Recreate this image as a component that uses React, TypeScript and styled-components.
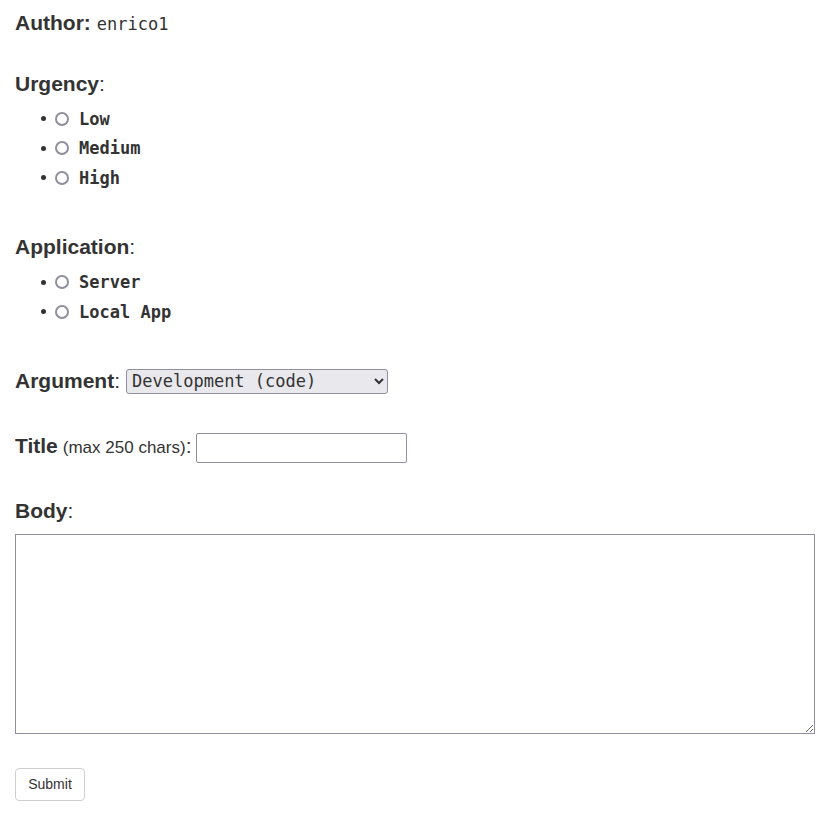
import React from "react";
import styled, { createGlobalStyle } from "styled-components";

const Global = createGlobalStyle`
  html, body { margin: 0; padding: 0; background: #fff; }
  body { font-family: "Liberation Sans", Arial, sans-serif; color: #333; }
`;

const Page = styled.form`
  padding: 11px 15px 20px;
  width: 800px;
  display: flex;
  flex-direction: column;
  align-items: flex-start;
`;

const Row = styled.div<{ $top?: number; $align?: string }>`
  display: flex;
  align-items: ${(p) => p.$align ?? "baseline"};
  margin-top: ${(p) => p.$top ?? 0}px;
  line-height: 24px;
  font-size: 21px;
`;

const Label = styled.strong`
  font-weight: 700;
  font-size: 21px;
`;

const Hint = styled.span`
  font-size: 17px;
  margin-left: 5px;
`;

const Colon = styled.span`
  margin-right: 5px;
`;

const Mono = styled.code`
  font-family: "DejaVu Sans Mono", monospace;
  font-size: 17px;
  margin-left: 6px;
`;

const List = styled.ul<{ $top?: number }>`
  margin: ${(p) => p.$top ?? 8}px 0 0;
  padding-left: 26px;
  list-style: none;
`;

const Item = styled.li`
  display: flex;
  align-items: center;
  height: 29.5px;
  font-size: 17px;
  &::before {
    content: "";
    width: 5px;
    height: 5px;
    border-radius: 50%;
    background: #333;
    margin-right: 9px;
  }
`;

const Choice = styled.label`
  display: flex;
  align-items: center;
  gap: 10px;
  font-family: "DejaVu Sans Mono", monospace;
  font-weight: 700;
  font-size: 17px;
  line-height: 20px;
`;

const Radio = styled.input`
  appearance: none;
  width: 14px;
  height: 14px;
  margin: 0;
  box-sizing: border-box;
  border: 2px solid #8f8f9d;
  border-radius: 50%;
  background: #fff;
  &:checked {
    border: 4px solid #0060df;
  }
`;

const Select = styled.select`
  width: 262px;
  height: 25px;
  margin-left: 1px;
  font-family: "DejaVu Sans Mono", monospace;
  font-size: 17px;
  color: #333;
  background: #e9e9ed;
  border: 1px solid #8f8f9d;
  border-radius: 3px;
  padding: 0 4px 0 1px;
`;

const TextInput = styled.input`
  width: 211px;
  height: 30px;
  box-sizing: border-box;
  border: 1px solid #8f8f9d;
  border-radius: 2px;
  padding: 2px 4px;
  font-size: 16px;
`;

const TextArea = styled.textarea`
  margin-top: 11px;
  width: 800px;
  height: 200px;
  box-sizing: border-box;
  border: 1px solid #8f8f9d;
  border-radius: 0;
  font-size: 16px;
`;

const Button = styled.button`
  margin-top: 34px;
  width: 70px;
  height: 33px;
  background: #fff;
  border: 1px solid #cfcfcf;
  border-radius: 4px;
  font-family: "Liberation Sans", Arial, sans-serif;
  font-size: 14px;
  color: #333;
`;

const urgencies = ["Low", "Medium", "High"];
const apps = ["Server", "Local App"];

export default function App() {
  return (
    <>
      <Global />
      <Page onSubmit={(e) => e.preventDefault()}>
        <Row>
          <Label>Author:</Label>
          <Mono>enrico1</Mono>
        </Row>

        <Row $top={36}>
          <Label>Urgency</Label>:
        </Row>
        <List $top={8}>
          {urgencies.map((u) => (
            <Item key={u}>
              <Choice>
                <Radio type="radio" name="urgency" value={u} />
                {u}
              </Choice>
            </Item>
          ))}
        </List>

        <Row $top={42}>
          <Label>Application</Label>:
        </Row>
        <List $top={9}>
          {apps.map((a) => (
            <Item key={a}>
              <Choice>
                <Radio type="radio" name="app" value={a} />
                {a}
              </Choice>
            </Item>
          ))}
        </List>

        <Row $top={42} $align="center">
          <Label>Argument</Label>
          <Colon>:</Colon>
          <Select defaultValue="dev">
            <option value="dev">Development (code)</option>
          </Select>
        </Row>

        <Row $top={39}>
          <Label>Title</Label>
          <Hint>(max 250 chars)</Hint>
          <Colon>:</Colon>
          <TextInput type="text" maxLength={250} />
        </Row>

        <Row $top={36}>
          <Label>Body</Label>:
        </Row>
        <TextArea />

        <Button type="submit">Submit</Button>
      </Page>
    </>
  );
}
